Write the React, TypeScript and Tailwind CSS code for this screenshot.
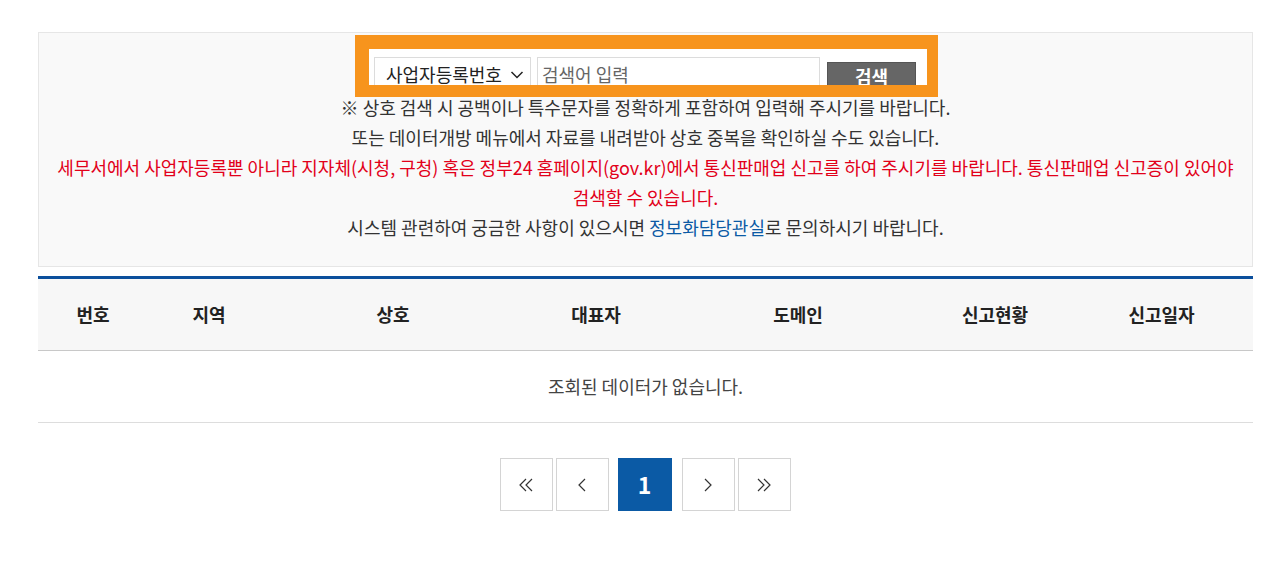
import React from "react";

const cols = [
  { label: "번호", w: "w-[110px]" },
  { label: "지역", w: "w-[122px]" },
  { label: "상호", w: "w-[246px]" },
  { label: "대표자", w: "w-[160px]" },
  { label: "도메인", w: "w-[244px]" },
  { label: "신고현황", w: "w-[150px]" },
  { label: "신고일자", w: "w-[183px]" },
];

function Chevron({ dir, double }: { dir: "l" | "r"; double?: boolean }) {
  const single = dir === "l" ? "M12 2 L6 8 L12 14" : "M6 2 L12 8 L6 14";
  const d2a = dir === "l" ? "M9 2 L3 8 L9 14" : "M3 2 L9 8 L3 14";
  const d2b = dir === "l" ? "M15 2 L9 8 L15 14" : "M9 2 L15 8 L9 14";
  return (
    <svg width="18" height="16" viewBox="0 0 18 16" fill="none" stroke="#333" strokeWidth="1.2">
      {double ? (
        <>
          <path d={d2a} />
          <path d={d2b} />
        </>
      ) : (
        <path d={single} />
      )}
    </svg>
  );
}

export default function App() {
  return (
    <div
      className="min-h-[571px] bg-white text-[#333]"
      style={{ fontFamily: '"Noto Sans CJK KR", "Noto Sans", sans-serif' }}
    >
      <div className="ml-[38px] w-[1215px] pt-[32px]">
        {/* Info box */}
        <div className="border border-[#e6e6e6] bg-[#f9f9f9] pt-[2px] pb-[24px] text-[18px] leading-[30px] text-center">
          <div className="flex justify-center">
            <div className="ml-[2px] box-border h-[62px] w-[583px] overflow-hidden border-solid border-[#f7941d] border-t-[14px] border-l-[14px] border-r-[11px] border-b-[12px] bg-white">
              <div className="flex items-start pt-[8px] pl-[5px]">
                <div className="flex h-[40px] w-[157px] items-start border border-[#dcdcdc] bg-white pl-[11px] pt-[3px] text-[18px] leading-[26px] text-[#222]">
                  <span>사업자등록번호</span>
                  <svg className="ml-[7px] mt-[9px]" width="16" height="10" viewBox="0 0 14 10" fill="none" stroke="#222" strokeWidth="1.5">
                    <path d="M1.5 2 L7 7.5 L12.5 2" />
                  </svg>
                </div>
                <div className="ml-[6px] h-[40px] w-[283px] border border-[#dcdcdc] bg-white pl-[4px] pt-[3px] text-left text-[18px] leading-[26px] text-[#666]">
                  검색어 입력
                </div>
                <div className="ml-[7px] mt-[5px] flex h-[30px] w-[89px] justify-center border border-[#555] bg-[#666] pt-[2px] text-[18px] font-semibold leading-[22px] text-white">
                  검색
                </div>
              </div>
            </div>
          </div>
          <div className="-mt-[5px]">
            <p>※ 상호 검색 시 공백이나 특수문자를 정확하게 포함하여 입력해 주시기를 바랍니다.</p>
            <p>또는 데이터개방 메뉴에서 자료를 내려받아 상호 중복을 확인하실 수도 있습니다.</p>
            <p className="text-[#e2001a]">
              <span className="whitespace-nowrap">
                세무서에서 사업자등록뿐 아니라 지자체(시청, 구청) 혹은 정부24 홈페이지(gov.kr)에서 통신판매업 신고를 하여 주시기를 바랍니다. 통신판매업 신고증이 있어야
              </span>
              <br />
              검색할 수 있습니다.
            </p>
            <p>
              시스템 관련하여 궁금한 사항이 있으시면 <span className="text-[#0b5aa5]">정보화담당관실</span>로 문의하시기 바랍니다.
            </p>
          </div>
        </div>

        {/* Table */}
        <div className="mt-[9px] border-t-[3px] border-[#0b4f9c]">
          <div className="flex h-[72px] items-center border-b border-[#c8c8c8] bg-[#f7f7f7]">
            {cols.map((c) => (
              <div key={c.label} className={`${c.w} text-center text-[18px] font-bold text-[#222]`}>
                {c.label}
              </div>
            ))}
          </div>
          <div className="flex h-[72px] items-center justify-center border-b border-[#dddddd] text-[18px] text-[#444]">
            조회된 데이터가 없습니다.
          </div>
        </div>

        {/* Pagination */}
        <div className="mt-[35px] flex justify-center pr-[1px]">
          <div className="flex items-stretch">
            <div className="flex h-[53px] w-[53px] items-center justify-center border border-[#d4d4d4] bg-white">
              <Chevron dir="l" double />
            </div>
            <div className="ml-[3px] flex h-[53px] w-[53px] items-center justify-center border border-[#d4d4d4] bg-white">
              <Chevron dir="l" />
            </div>
            <div className="ml-[9px] flex h-[53px] w-[54px] items-center justify-center bg-[#0b5aa5] text-[23px] font-bold text-white">
              1
            </div>
            <div className="ml-[10px] flex h-[53px] w-[53px] items-center justify-center border border-[#d4d4d4] bg-white">
              <Chevron dir="r" />
            </div>
            <div className="ml-[3px] flex h-[53px] w-[53px] items-center justify-center border border-[#d4d4d4] bg-white">
              <Chevron dir="r" double />
            </div>
          </div>
        </div>
      </div>
    </div>
  );
}
